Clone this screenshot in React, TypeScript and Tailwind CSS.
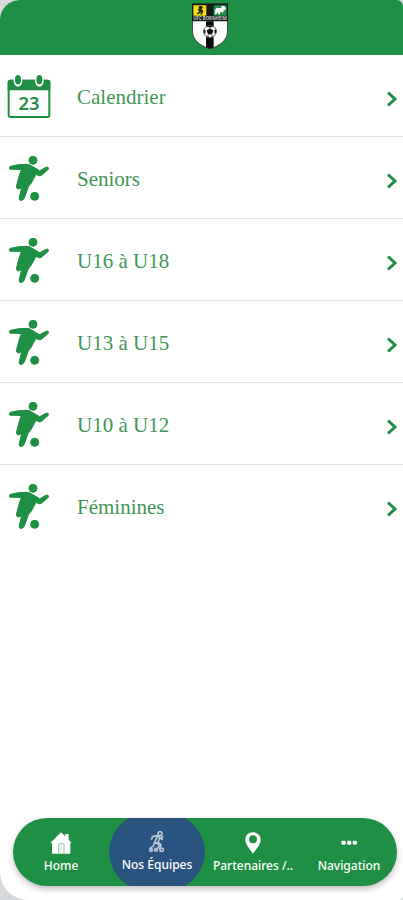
import type { ReactNode } from "react";

function CalendarIcon() {
  return (
    <svg viewBox="21 42 132 135" className="h-[45px] w-11" aria-hidden="true">
      <rect x="26" y="62" width="122" height="109" rx="6" fill="#fff" stroke="#1e8f43" strokeWidth="6" />
      <path d="M29 59h116q6 0 6 7v25H23V66q0-7 6-7z" fill="#1e8f43" />
      <ellipse cx="54" cy="62" rx="13" ry="18" fill="#fff" />
      <ellipse cx="118" cy="62" rx="13" ry="18" fill="#fff" />
      <ellipse cx="54" cy="59" rx="9" ry="14" fill="#1e8f43" />
      <ellipse cx="118" cy="59" rx="9" ry="14" fill="#1e8f43" />
      <text
        x="87"
        y="150"
        textAnchor="middle"
        fontFamily="'Noto Sans', sans-serif"
        fontWeight="600"
        fontSize="55"
        fill="#1e8f43"
      >
        23
      </text>
    </svg>
  );
}

function PlayerIcon() {
  return (
    <svg
      viewBox="24 30 126 141"
      className="h-[47px] w-[42px]"
      fill="#1e8f43"
      stroke="#1e8f43"
      strokeWidth="3"
      strokeLinejoin="round"
      aria-hidden="true"
    >
      <circle cx="99" cy="46" r="12" />
      <circle cx="104" cy="154" r="12" />
      <path d="M31 64Q52 58 78 58Q88 57 95 63L119 77L138 67Q143 65 145 68Q146 72 143 75L124 91Q119 94 114 91L108 88L94 114Q87 122 84 128L72 161Q67 168 60 166Q56 163 58 157L65 128L60 130Q54 134 51 130Q48 128 50 121L58 91L64 74Q48 72 32 73Q28 73 28 69Q28 66 31 64z" />
    </svg>
  );
}

function ChevronIcon() {
  return (
    <svg viewBox="0 0 12 18" className="h-[18px] w-3" fill="none" stroke="#1e8f43" strokeWidth="3" aria-hidden="true">
      <path d="M2 2.5L9 9L2 15.5" />
    </svg>
  );
}

function ClubLogo() {
  return (
    <svg viewBox="66 8 108 140" className="h-[47px] w-9" role="img" aria-label="Club">
      <path d="M66 9H174V92Q174 116 153 131Q138 142 120 147Q102 142 87 131Q66 116 66 92z" fill="#3a5243" />
      <path d="M66 9H174V62H66z" fill="#151816" />
      <path d="M69 62H171V92Q171 114 152 128Q137 139 120 144Q103 139 88 128Q69 114 69 92z" fill="#fff" />
      <path d="M108 62H131V141L120 145L108 141z" fill="#0c0e0d" />
      <path d="M70 14H109V46H70z" fill="#efdc13" />
      <path d="M131 14H170V46H131z" fill="#1b9148" />
      <path d="M85 18l9-2 5 5-5 5 6 5-4 11h-5l2-8-7 7-6-1 8-8-5-6 5-2z" fill="#252416" />
      <path d="M133 32l7-10 12 1 5-8 9 4 2 8-7 3-2 7-7-3-3 8-5-1 1-7-7 7-5-1 4-8z" fill="#fff" />
      <text
        x="120"
        y="59"
        textAnchor="middle"
        fontFamily="'Open Sans', sans-serif"
        fontWeight="700"
        fontSize="13"
        fill="#c9cdca"
      >
        UFC BORNHEIM
      </text>
      <circle cx="120" cy="93" r="19" fill="#fff" stroke="#222" strokeWidth="2" />
      <path d="M120 83l10 7-4 12h-12l-4-12zM109 77l11-3 11 3-11 5zM101 87l6 2-1 11-5-3zM139 87l-6 2 1 11 5-3zM109 106l6-1 2 6zM131 106l-6-1-2 6z" fill="#111" />
    </svg>
  );
}

function HomeIcon() {
  return (
    <svg viewBox="0 0 66 66" className="size-[22px]" aria-hidden="true">
      <path d="M33 1L46 13V6H56V23L65 33H61V65H6V33H1z" fill="#fff" />
      <path d="M26 65V38q0-3 3-3h9q4 0 4 3v27" fill="none" stroke="#8bc49c" strokeWidth="3" />
      <path d="M32 65V42h4" fill="none" stroke="#b7dac1" strokeWidth="2" />
    </svg>
  );
}

function TeamIcon() {
  return (
    <svg
      viewBox="0 0 54 66"
      className="h-[22px] w-[18px]"
      fill="none"
      stroke="#b9c8d8"
      strokeWidth="5"
      strokeLinejoin="round"
      aria-hidden="true"
    >
      <circle cx="36" cy="8" r="6" />
      <path d="M13 17l13-3 9 5 9 8M13 17l-3 9M28 16l-8 17 13 8-3 12M35 21l-5 13 9 7-4 13M20 34l-4 12-10 4M44 15l-2 9" />
      <circle cx="9" cy="57" r="4" />
      <circle cx="24" cy="56" r="4" />
      <circle cx="41" cy="56" r="5" />
    </svg>
  );
}

function PinIcon() {
  return (
    <svg viewBox="0 0 48 66" className="h-[22px] w-4" aria-hidden="true">
      <path d="M24 1C10 1 1 10 1 23c0 16 14 27 23 42 9-15 23-26 23-42C47 10 38 1 24 1z" fill="#fff" />
      <circle cx="24" cy="22" r="12" fill="#1e8f43" />
    </svg>
  );
}

function MoreIcon() {
  return (
    <svg viewBox="0 0 48 66" className="h-[22px] w-4" fill="#fff" aria-hidden="true">
      <rect x="1" y="26" width="13" height="12" rx="4" />
      <rect x="18" y="26" width="13" height="12" rx="4" />
      <rect x="35" y="26" width="13" height="12" rx="4" />
    </svg>
  );
}

const teams = ["Calendrier", "Seniors", "U16 à U18", "U13 à U15", "U10 à U12", "Féminines"];

type TabProps = {
  label: string;
  icon: ReactNode;
  active?: boolean;
};

function Tab({ label, icon, active }: TabProps) {
  return (
    <a
      href="#"
      aria-current={active ? "page" : undefined}
      className={
        active
          ? "flex h-[84px] min-w-0 flex-1 flex-col items-center justify-center rounded-[50%] bg-[#29547f] text-white"
          : "flex h-full min-w-0 flex-1 flex-col items-center justify-center pt-0.5 text-white"
      }
    >
      {icon}
      <span className="mt-1 whitespace-nowrap font-['Noto_Sans',sans-serif] text-xs leading-4 font-medium">
        {label}
      </span>
    </a>
  );
}

function App() {
  return (
    <div className="min-h-screen bg-[#d6d9dc]">
      <div className="flex min-h-screen flex-col overflow-hidden rounded-tl-[20px] rounded-tr-md rounded-br-sm rounded-bl-[28px] bg-white">
        <header className="flex h-[55px] items-start justify-center bg-[#1e8f43] pt-[3px] pl-4">
          <ClubLogo />
        </header>
        <main className="flex-1">
          <ul>
            {teams.map((team, index) => (
              <li key={team} className="border-b border-[#e2e2e2] last:border-b-0">
                <a href="#" className="flex h-[81px] items-center pt-1.5 pr-[5px]">
                  <span className="flex w-[57px] shrink-0 justify-center pb-1">
                    {index === 0 ? <CalendarIcon /> : <PlayerIcon />}
                  </span>
                  <span className="ml-5 flex-1 pb-1 font-['Liberation_Serif',serif] text-[21px] leading-7 text-[#3f9658]">
                    {team}
                  </span>
                  <ChevronIcon />
                </a>
              </li>
            ))}
          </ul>
        </main>
        <nav className="mr-1.5 mb-3.5 ml-[13px] flex h-[68px] items-center overflow-hidden rounded-full bg-[#1e8f43] shadow-[0_3px_6px_rgba(0,0,0,0.25)]">
          <Tab label="Home" icon={<HomeIcon />} />
          <Tab label="Nos Équipes" icon={<TeamIcon />} active />
          <Tab label="Partenaires /.." icon={<PinIcon />} />
          <Tab label="Navigation" icon={<MoreIcon />} />
        </nav>
      </div>
    </div>
  );
}

export default App;
